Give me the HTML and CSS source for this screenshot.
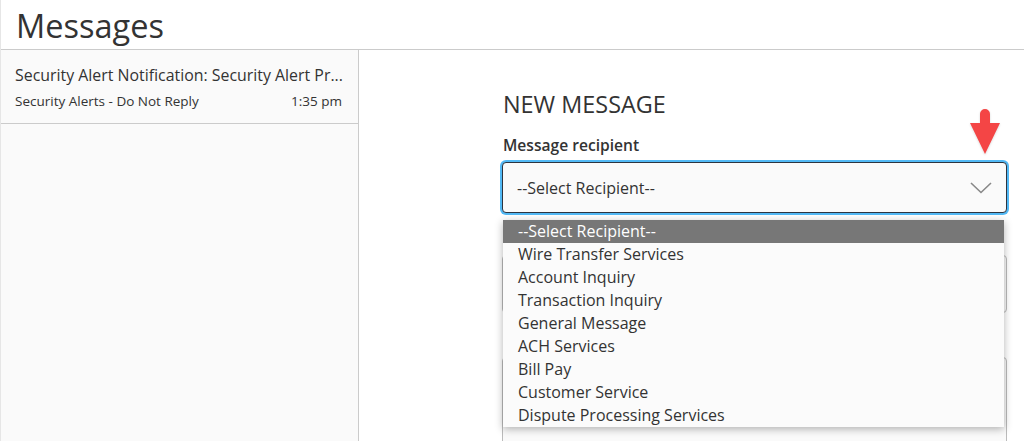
FILE: index.html
```html
<!DOCTYPE html>
<html>
<head>
<meta charset="utf-8">
<link rel="stylesheet" href="styles.css">
</head>
<body>
<div class="page">
  <header class="top">
    <h1 class="title">Messages</h1>
  </header>
  <div class="content">
    <aside class="sidebar">
      <div class="item">
        <div class="item-title">Security Alert Notification: Security Alert Pr...</div>
        <div class="item-meta">
          <span>Security Alerts - Do Not Reply</span>
          <span>1:35 pm</span>
        </div>
      </div>
    </aside>
    <main class="main">
      <div class="form">
        <h2 class="form-title">NEW MESSAGE</h2>
        <label class="label">Message recipient</label>
        <div class="select-wrap">
          <div class="select">
            <span>--Select Recipient--</span>
            <svg class="chev" width="22" height="12" viewBox="0 0 22 12"><path d="M1 1 L11 10.5 L21 1" fill="none" stroke="#888" stroke-width="1.6"/></svg>
          </div>
          <svg class="arrow" width="34" height="46" viewBox="0 0 34 46">
            <path d="M12 5 a5 5 0 0 1 10 0 V14 H32 L17 45 L2 14 H12 Z" fill="#f44545"/>
          </svg>
          <ul class="menu">
            <li class="sel">--Select Recipient--</li>
            <li>Wire Transfer Services</li>
            <li>Account Inquiry</li>
            <li>Transaction Inquiry</li>
            <li>General Message</li>
            <li>ACH Services</li>
            <li>Bill Pay</li>
            <li>Customer Service</li>
            <li>Dispute Processing Services</li>
          </ul>
        </div>
        <div class="input"></div>
        <div class="textarea"></div>
      </div>
    </main>
  </div>
</div>
</body>
</html>
```

FILE: styles.css
```css
html, body {
  margin: 0;
  padding: 0;
  background: #fff;
  font-family: "Open Sans", "Liberation Sans", sans-serif;
  color: #333;
}
.page {
  height: 441px;
  overflow: hidden;
  border-left: 1px solid #e6e6e6;
  box-sizing: border-box;
}
.top {
  height: 49px;
  border-bottom: 1px solid #cbcbcb;
}
.title {
  margin: 0;
  padding-left: 15px;
  padding-top: 3px;
  font-size: 32.5px;
  font-weight: 400;
  line-height: 46px;
  color: #333;
}
.content {
  display: flex;
  height: 392px;
}
.sidebar {
  width: 357px;
  background: #fafafa;
  border-right: 1px solid #cbcbcb;
  flex-shrink: 0;
}
.item {
  height: 74px;
  box-sizing: border-box;
  border-bottom: 1px solid #cbcbcb;
  padding: 13px 16px 0 14px;
}
.item-title {
  font-size: 15.9px;
  line-height: 24px;
  white-space: nowrap;
}
.item-meta {
  display: flex;
  justify-content: space-between;
  font-size: 13.5px;
  line-height: 22px;
  margin-top: 3px;
}
.main {
  flex: 1;
  padding-left: 143px;
  padding-right: 17px;
}
.form {
  width: 505px;
  padding-top: 40px;
}
.form-title {
  margin: 0;
  font-size: 23.4px;
  font-weight: 400;
  line-height: 28px;
  color: #333;
  padding-left: 1px;
}
.label {
  display: block;
  font-size: 15.6px;
  font-weight: 600;
  line-height: 20px;
  margin-top: 17px;
  margin-bottom: 7px;
  padding-left: 1px;
}
.select-wrap {
  position: relative;
}
.select {
  height: 51px;
  box-sizing: border-box;
  border: 1px solid #2c3440;
  border-radius: 4px;
  box-shadow: 0 0 0 2px #52b9f5;
  background: #fafafa;
  display: flex;
  align-items: center;
  justify-content: space-between;
  padding: 0 14px 0 14px;
  font-size: 16px;
}
.arrow {
  position: absolute;
  right: 5px;
  top: -53px;
  filter: drop-shadow(0 1px 1px rgba(0,0,0,0.15));
}
.menu {
  position: absolute;
  left: 1px;
  top: 58px;
  width: 501px;
  margin: 0;
  padding: 0;
  list-style: none;
  background: #fbfbfb;
  box-shadow: 0 2px 8px rgba(0,0,0,0.3);
  z-index: 2;
}
.menu li {
  height: 23px;
  line-height: 23px;
  font-size: 16px;
  padding-left: 15px;
  color: #333;
}
.menu li.sel {
  background: #777;
  color: #fff;
}
.input {
  margin-top: 42px;
  height: 56px;
  border: 1px solid #bbb;
  border-radius: 4px;
  background: #fafafa;
}
.textarea {
  margin-top: 44px;
  height: 120px;
  border: 1px solid #bbb;
  border-radius: 4px;
  background: #fafafa;
}
```
